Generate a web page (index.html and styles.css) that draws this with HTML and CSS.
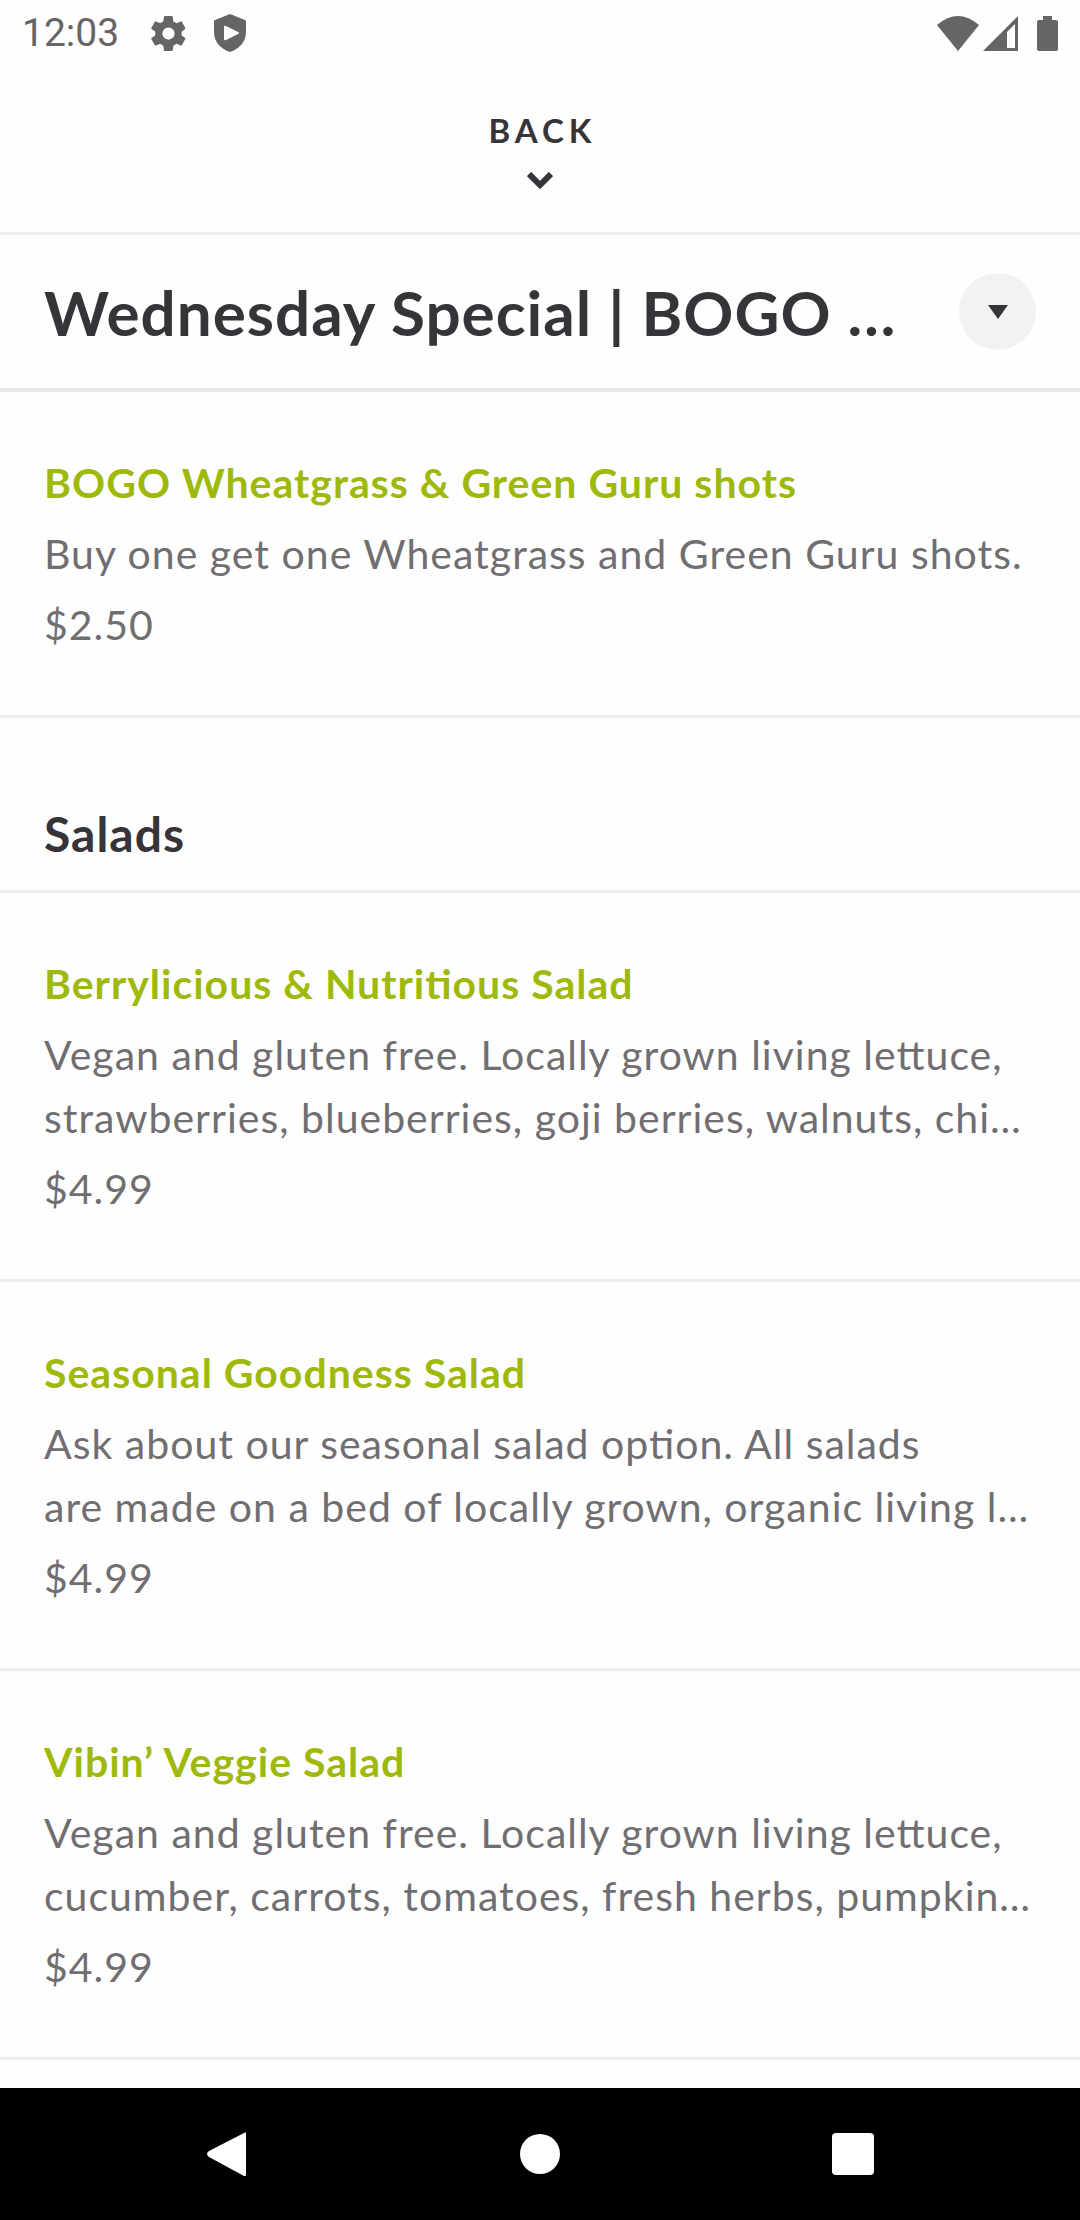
FILE: index.html
```html
<!DOCTYPE html>
<html lang="en">
<head>
    <meta charset="UTF-8">
    <meta name="viewport" content="width=device-width, initial-scale=1.0">
    <title>Menu</title>
    <link rel="stylesheet" href="styles.css">
</head>
<body>

<div class="status-bar">
    <span class="time">12:03</span>
    <svg class="gear" viewBox="2 2 20 20" width="35" height="35"><path d="M19.400 13c.1-.3.1-.6.1-1s0-.7-.1-1l2.100-1.600c.2-.2.2-.4.1-.6l-2-3.500c-.1-.2-.4-.3-.6-.2l-2.500 1c-.5-.4-1.100-.7-1.700-1l-.4-2.600c0-.3-.2-.5-.5-.5h-4c-.3 0-.5.2-.5.5L9 5.100c-.6.3-1.200.6-1.700 1l-2.500-1c-.2-.1-.5 0-.6.2l-2 3.500c-.1.2-.1.5.1.6L4.500 11c-.1.300-.1.700-.1 1s0 .7.1 1l-2.200 1.600c-.2.200-.2.400-.1.600l2 3.500c.1.200.4.300.6.200l2.500-1c.5.400 1.100.700 1.700 1l.4 2.600c0 .300.200.500.500.500h4c.3 0 .500-.2.500-.5l.4-2.600c.6-.3 1.200-.6 1.700-1l2.500 1c.2.100.5 0 .6-.2l2-3.500c.1-.2.100-.5-.1-.6zM12 15.500a3.500 3.500 0 1 1 0-7 3.500 3.500 0 0 1 0 7z"/></svg>
    <svg class="shield" viewBox="0 0 32 38" width="32" height="38"><path fill-rule="evenodd" d="M16 0 31 6Q32 6 32 8V18C32 28 25 35 16 38 7 35 0 28 0 18V8Q0 6 1 6ZM12 12Q10 11 10 13V25Q10 27 12 26L24 20Q26 19 24 18Z"/></svg>
    <div class="signals">
        <svg viewBox="0 0 42 35" width="42" height="35"><path d="M0 9Q21-9 42 9L21 35Z"/></svg>
        <svg viewBox="0 0 35 35" width="35" height="35"><path fill-rule="evenodd" d="M35 0V35H0ZM32 8 24 16V32H32Z"/></svg>
        <svg class="battery" viewBox="0 0 21 35" width="21" height="35"><path d="M6 0h9v4h4q2 0 2 2v27q0 2-2 2H2q-2 0-2-2V6q0-2 2-2h4Z"/></svg>
    </div>
</div>

<button type="button" class="back">
    <span>BACK</span>
    <svg viewBox="0 0 26 17" width="26" height="17"><path d="M2 2 13 13 24 2" fill="none" stroke="#363438" stroke-width="6"/></svg>
</button>

<header class="title-bar">
    <h1>Wednesday Special | BOGO …</h1>
    <button type="button" class="dropdown" aria-label="Choose section">
        <svg viewBox="0 0 20 14" width="20" height="14"><path d="M0 0H20L10 14Z"/></svg>
    </button>
</header>

<main>
    <article class="item">
        <h3>BOGO Wheatgrass &amp; Green Guru shots</h3>
        <p>Buy one get one Wheatgrass and Green Guru shots.</p>
        <p>$2.50</p>
    </article>

    <h2>Salads</h2>

    <article class="item">
        <h3>Berrylicious &amp; Nutritious Salad</h3>
        <p>Vegan and gluten free. Locally grown living lettuce,<br>strawberries, blueberries, goji berries, walnuts, chi…</p>
        <p>$4.99</p>
    </article>
    <article class="item">
        <h3>Seasonal Goodness Salad</h3>
        <p>Ask about our seasonal salad option. All salads<br>are made on a bed of locally grown, organic living l…</p>
        <p>$4.99</p>
    </article>
    <article class="item">
        <h3>Vibin’ Veggie Salad</h3>
        <p>Vegan and gluten free. Locally grown living lettuce,<br>cucumber, carrots, tomatoes, fresh herbs, pumpkin…</p>
        <p>$4.99</p>
    </article>
</main>

<nav class="nav-bar">
    <button type="button" aria-label="Back">
        <svg viewBox="0 0 44 44" width="44" height="44"><path d="M39 1Q41-1 41 2V42Q41 45 39 44L4 25Q0 22 4 19Z"/></svg>
    </button>
    <button type="button" aria-label="Home">
        <svg viewBox="0 0 44 44" width="44" height="44"><circle cx="22" cy="22" r="20"/></svg>
    </button>
    <button type="button" aria-label="Recent apps">
        <svg viewBox="0 0 44 44" width="44" height="44"><rect x="1" y="1" width="42" height="42" rx="4"/></svg>
    </button>
</nav>

</body>
</html>
```

FILE: styles.css
```css
* {
    box-sizing: border-box;
}

body {
    margin: 0;
    min-height: 100vh;
    display: flex;
    flex-direction: column;
    background: #fefefe;
    color: #363438;
    font-family: Lato, Carlito, sans-serif;
    letter-spacing: 1px;
    /* keep the ti and tt ligatures with tracking on */
    font-feature-settings: "liga" 1;
}

h1, h2, h3, p {
    margin: 0;
}

svg {
    display: block;
    flex: none;
}

button {
    border: none;
    padding: 0;
    background: none;
    color: inherit;
    font-family: inherit;
    cursor: pointer;
}

.status-bar {
    display: flex;
    align-items: center;
    height: 66px;
    padding: 0 22px;
    color: #666467;
    fill: #666467;
    letter-spacing: normal;
}

.time {
    font-family: Roboto, sans-serif;
    font-size: 39px;
    margin-right: 32px;
}

.gear {
    margin-right: 28px;
}

.signals {
    display: flex;
    gap: 4px;
    margin-left: auto;
}

.battery {
    margin-left: 15px;
}

.back {
    display: flex;
    flex-direction: column;
    align-items: center;
    gap: 21px;
    height: 169px;
    padding-top: 44px;
    border-bottom: 3px solid #efedf0;
    font-size: 33px;
    font-weight: 700;
    line-height: 41px;
    letter-spacing: 5px;
}

.back span {
    padding-left: 5px;
}

.title-bar {
    display: flex;
    align-items: center;
    justify-content: space-between;
    height: 157px;
    padding: 0 44px;
    border-bottom: 4px solid #e8e6e9;
}

h1 {
    font-size: 62px;
    font-weight: 700;
    white-space: nowrap;
}

.dropdown {
    display: flex;
    align-items: center;
    justify-content: center;
    width: 77px;
    height: 77px;
    border-radius: 50%;
    background: #f3f1f4;
    fill: #363438;
}

main {
    flex: 1;
}

h2 {
    padding: 80px 44px 20px;
    border-bottom: 3px solid #eeedef;
    font-size: 48px;
    font-weight: 700;
    line-height: 72px;
}

.item {
    display: flex;
    flex-direction: column;
    gap: 8px;
    padding: 59px 44px;
    border-bottom: 3px solid #eeedef;
    color: #706e71;
    font-size: 41px;
    line-height: 63px;
}

h3 {
    color: #9fb90a;
    font-size: 41px;
    font-weight: 700;
}

.nav-bar {
    display: flex;
    justify-content: space-around;
    align-items: center;
    height: 132px;
    padding: 0 70px;
    background: #000;
    fill: #fff;
}

.nav-bar button {
    display: flex;
    justify-content: center;
    width: 44px;
}
```
